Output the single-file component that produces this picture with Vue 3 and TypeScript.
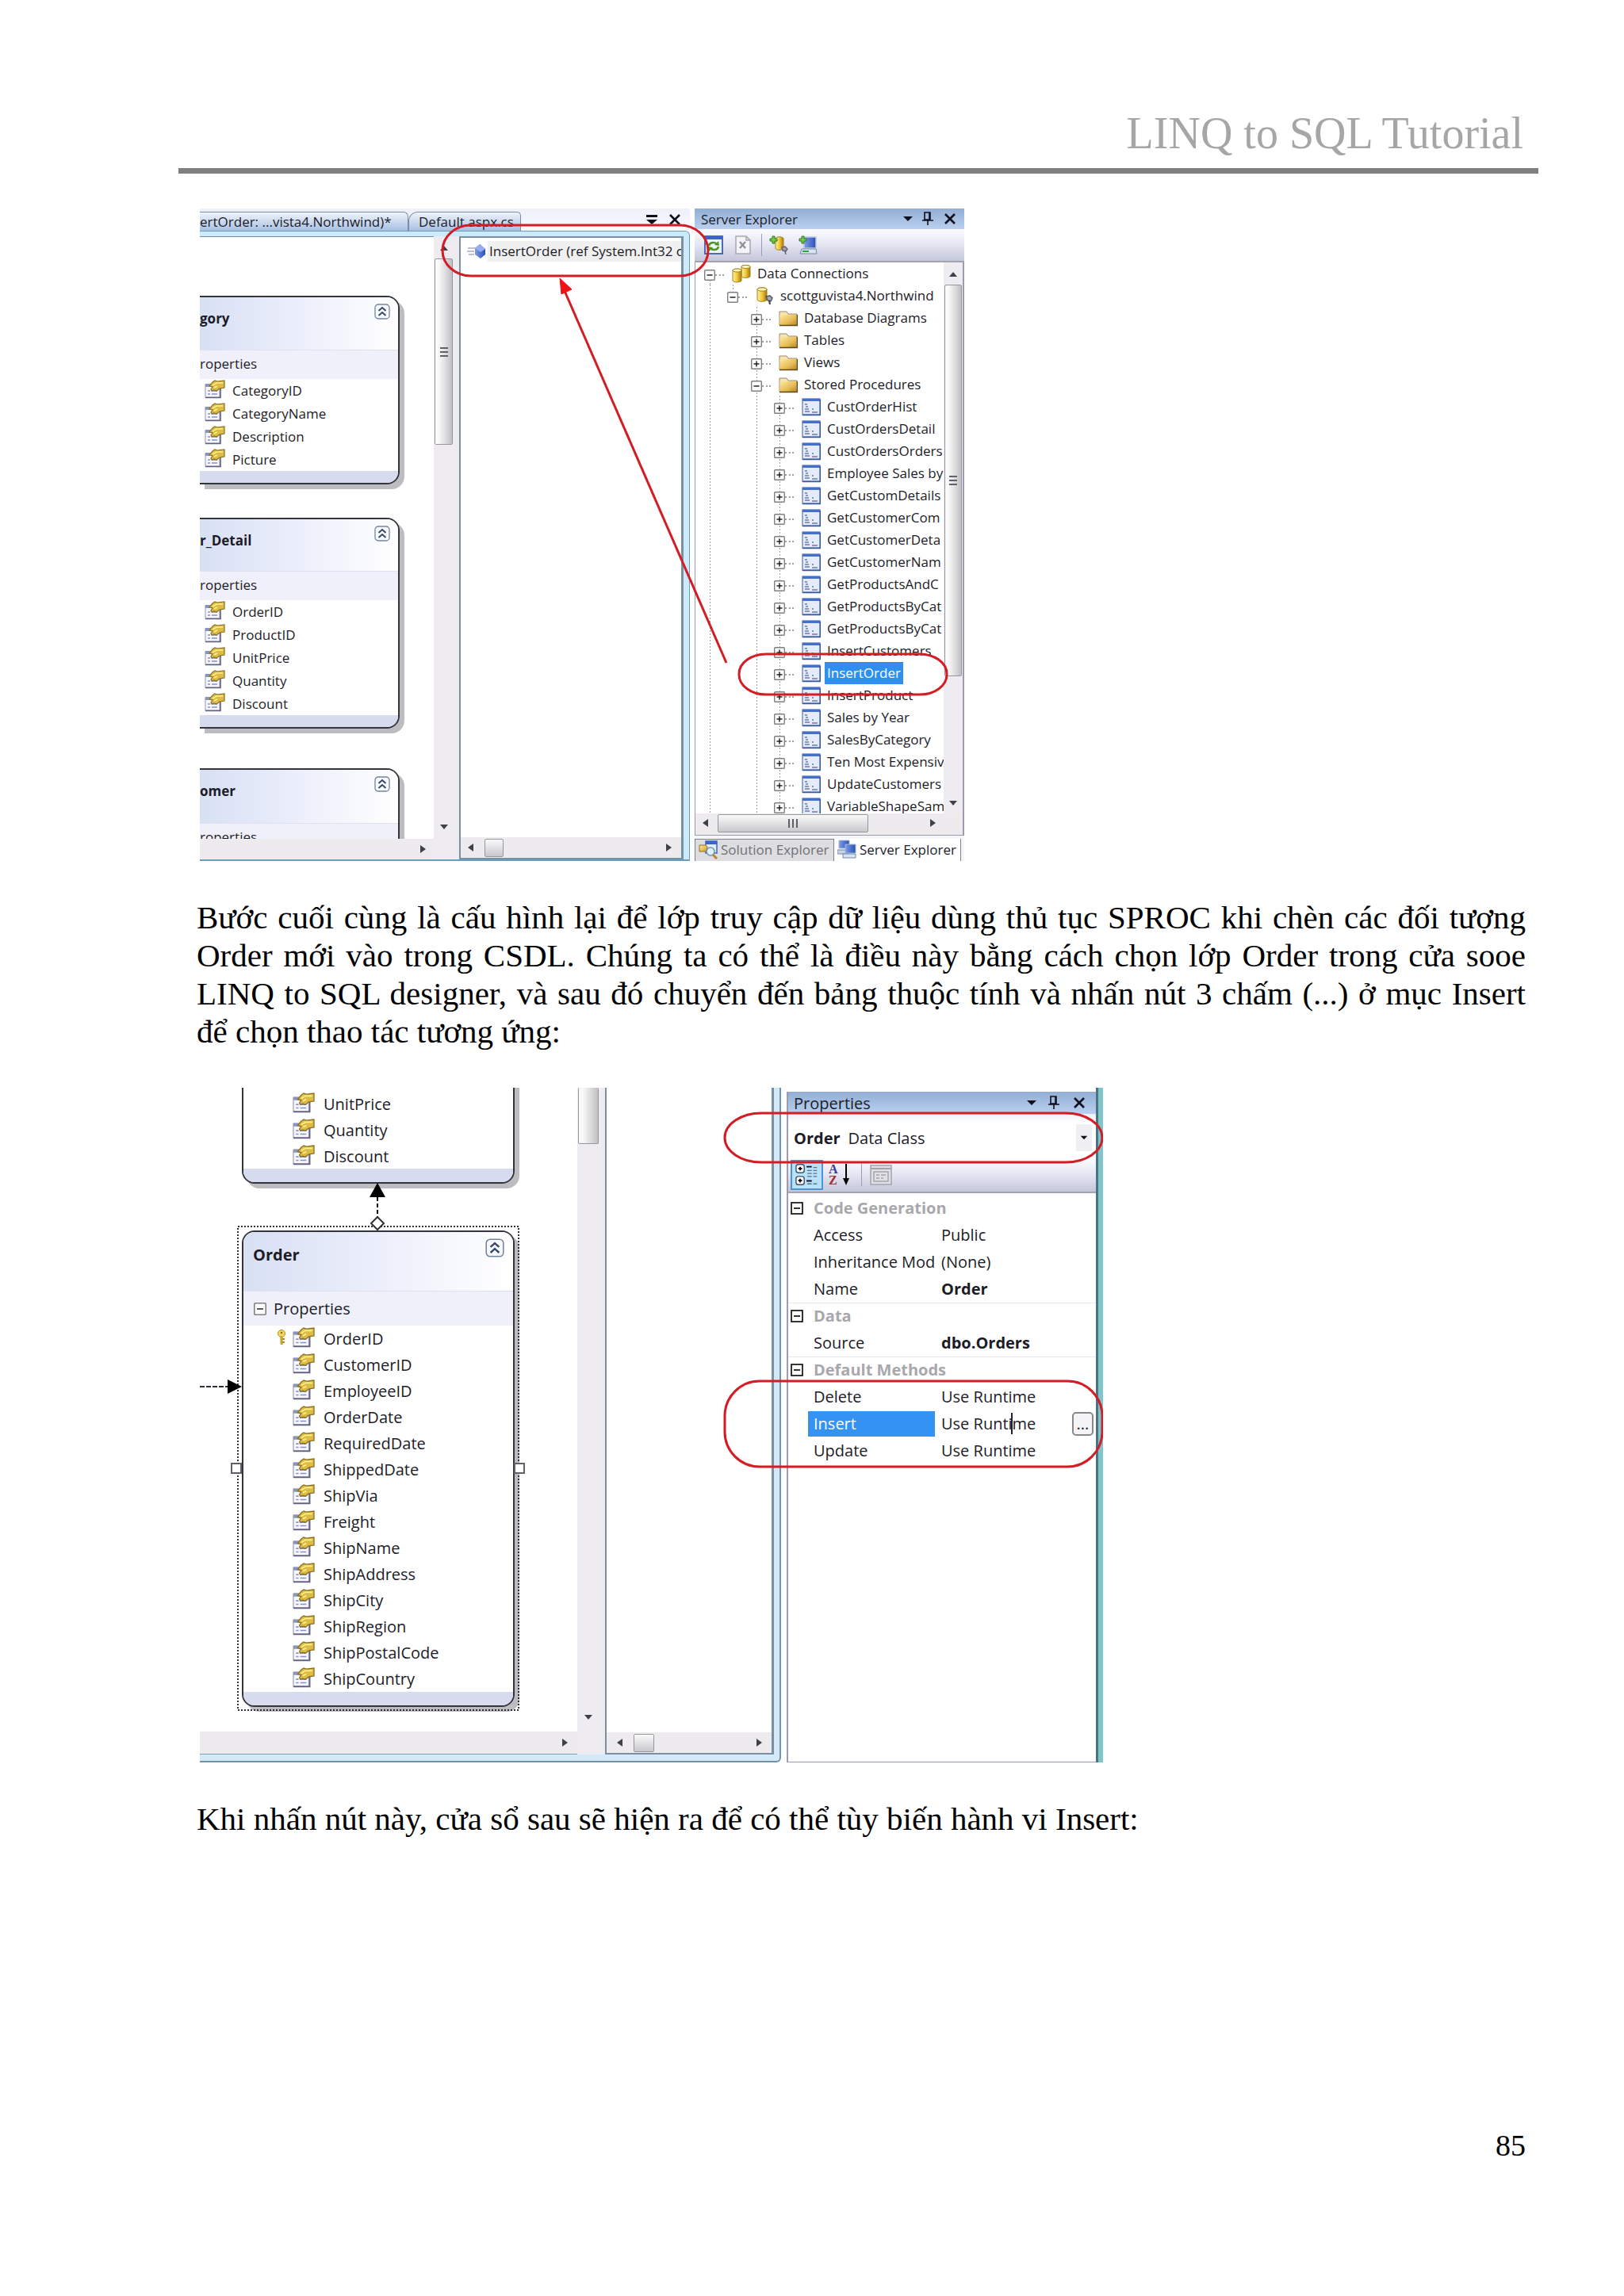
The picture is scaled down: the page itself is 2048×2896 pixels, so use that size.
<script setup lang="ts">
interface TreeItem {
  label: string
  level: number
  icon: string
  open?: boolean
  selected?: boolean
}

interface PropertyRow {
  label: string
  value?: string
  group?: boolean
  strong?: boolean
  selected?: boolean
}

interface Entity {
  id: string
  title: string
  fields: string[]
}

const entities: Entity[] = [
  { id: 'category', title: 'gory', fields: ['CategoryID', 'CategoryName', 'Description', 'Picture'] },
  { id: 'detail', title: 'r_Detail', fields: ['OrderID', 'ProductID', 'UnitPrice', 'Quantity', 'Discount'] },
  { id: 'customer', title: 'omer', fields: [] },
]

const procedures = [
  'CustOrderHist', 'CustOrdersDetail', 'CustOrdersOrders', 'Employee Sales by',
  'GetCustomDetails', 'GetCustomerCom', 'GetCustomerDeta', 'GetCustomerNam',
  'GetProductsAndC', 'GetProductsByCat', 'GetProductsByCat', 'InsertCustomers',
  'InsertOrder', 'InsertProduct', 'Sales by Year', 'SalesByCategory',
  'Ten Most Expensiv', 'UpdateCustomers', 'VariableShapeSam',
]

const tree: TreeItem[] = [
  { label: 'Data Connections', level: 0, icon: 'i-dbs', open: true },
  { label: 'scottguvista4.Northwind', level: 1, icon: 'i-db', open: true },
  { label: 'Database Diagrams', level: 2, icon: 'i-folder' },
  { label: 'Tables', level: 2, icon: 'i-folder' },
  { label: 'Views', level: 2, icon: 'i-folder' },
  { label: 'Stored Procedures', level: 2, icon: 'i-folder', open: true },
  ...procedures.map((label) => ({ label, level: 3, icon: 'i-proc', selected: label === 'InsertOrder' })),
]

const upperFields = ['UnitPrice', 'Quantity', 'Discount']
const orderFields = [
  'OrderID', 'CustomerID', 'EmployeeID', 'OrderDate', 'RequiredDate', 'ShippedDate', 'ShipVia',
  'Freight', 'ShipName', 'ShipAddress', 'ShipCity', 'ShipRegion', 'ShipPostalCode', 'ShipCountry',
]

const properties: PropertyRow[] = [
  { label: 'Code Generation', group: true },
  { label: 'Access', value: 'Public' },
  { label: 'Inheritance Mod', value: '(None)' },
  { label: 'Name', value: 'Order', strong: true },
  { label: 'Data', group: true },
  { label: 'Source', value: 'dbo.Orders', strong: true },
  { label: 'Default Methods', group: true },
  { label: 'Delete', value: 'Use Runtime' },
  { label: 'Insert', value: 'Use Runtime', selected: true },
  { label: 'Update', value: 'Use Runtime' },
]
</script>

<template>
  <div class="page">
    <svg class="sprite" aria-hidden="true">
      <defs>
        <linearGradient id="g-gold" x1="0" x2="1">
          <stop offset="0" stop-color="#fff3a0" /><stop offset=".5" stop-color="#f2c83c" /><stop offset="1" stop-color="#a87808" />
        </linearGradient>
        <linearGradient id="g-folder" x1="0" y1="0" x2="1" y2="1">
          <stop offset="0" stop-color="#fdeaa4" /><stop offset=".6" stop-color="#e6bc54" /><stop offset="1" stop-color="#b4862a" />
        </linearGradient>
        <linearGradient id="g-blue" x1="0" x2="1">
          <stop offset="0" stop-color="#7c9ce8" /><stop offset="1" stop-color="#2a50b4" />
        </linearGradient>
      </defs>
      <symbol id="i-prop" viewBox="0 0 26 24">
        <path d="M1 6h18v16H1z" fill="#f7f7ff" stroke="#a4a4bc" stroke-width="1.200" />
        <path d="M1 5h7v4H1z" fill="#8c96b4" />
        <path d="M1 22.500h19V9" fill="none" stroke="#606080" stroke-width="1.600" />
        <path d="M4 14h3m2 0h7M4 18h3m2 0h7" stroke="#8890c8" stroke-width="1.600" />
        <path d="m6 8 4-5 3-2 3 1 9-1v9l-6 1-4 3-3-1-3 1-1-2 2-3z" fill="#dcbc44" stroke="#8a7024" stroke-width="1.200" />
        <path d="m10 7 5-3 8 0M12 10l4-2" fill="none" stroke="#fff08c" stroke-width="1.600" />
      </symbol>
      <symbol id="i-up" viewBox="0 0 20 20">
        <rect x="1" y="1" width="18" height="18" rx="4" fill="#f8faff" stroke="#7484a0" stroke-width="1.300" />
        <path d="m5.500 9 4.500-4 4.500 4M5.500 15l4.500-4 4.500 4" fill="none" stroke="#36486c" stroke-width="2" />
      </symbol>
      <symbol id="i-dbs" viewBox="0 0 24 24">
        <path d="M12 3.500C12 1 23 1 23 3.500v12c0 2.500-11 2.500-11 0z" fill="url(#g-gold)" stroke="#a08020" />
        <path d="M1 8c0-2.500 11-2.500 11 0v13c0 2.500-11 2.500-11 0z" fill="url(#g-gold)" stroke="#a08020" />
        <ellipse cx="6.500" cy="8" rx="5.500" ry="2" fill="#fff6b8" stroke="#a08020" />
        <ellipse cx="17.500" cy="3.500" rx="5.500" ry="2" fill="#fff6b8" stroke="#a08020" />
      </symbol>
      <symbol id="i-db" viewBox="0 0 24 24">
        <path d="M3 4c0-3 12-3 12 0v13c0 3-12 3-12 0z" fill="url(#g-gold)" stroke="#a08020" />
        <ellipse cx="9" cy="4" rx="6" ry="2.200" fill="#fff6b8" stroke="#a08020" />
        <path d="m14 13 5-1 3 3-2 4-4-1z" fill="#a8a8b0" stroke="#505058" stroke-width="1.400" />
        <path d="m18 18 1 5" stroke="#404048" stroke-width="2" />
      </symbol>
      <symbol id="i-folder" viewBox="0 0 24 24">
        <path d="M1 21V4h9l2 3h11v14z" fill="#f4e6b8" stroke="#9c8860" />
        <path d="M1.500 8h21v13h-21z" fill="url(#g-folder)" />
        <path d="M1 21.500h22.500V8" fill="none" stroke="#604818" stroke-width="1.600" />
      </symbol>
      <symbol id="i-proc" viewBox="0 0 24 24">
        <rect x="1" y="2" width="22" height="20" fill="#e4ecfc" stroke="#6c88c4" stroke-width="1.400" />
        <path d="M1 2h22v3H1z" fill="#4470cc" />
        <path d="M4 9h3M5 12h3M4 15h5M4 18h6m3-3h2m-2 4h7" stroke="#6c7ca0" stroke-width="1.500" />
        <path d="M1 22.500h22.500V3" fill="none" stroke="#3c589c" stroke-width="1.500" />
      </symbol>
      <symbol id="i-plus" viewBox="0 0 14 14">
        <rect x=".7" y=".7" width="12.600" height="12.600" rx="1" fill="#fff" stroke="#808080" stroke-width="1.400" />
        <path d="M3.500 7h7M7 3.500v7" stroke="#202028" stroke-width="1.500" />
      </symbol>
      <symbol id="i-minus" viewBox="0 0 14 14">
        <rect x=".7" y=".7" width="12.600" height="12.600" rx="1" fill="#fff" stroke="#808080" stroke-width="1.400" />
        <path d="M3.500 7h7" stroke="#202028" stroke-width="1.500" />
      </symbol>
      <symbol id="i-box" viewBox="0 0 16 16">
        <rect x="1" y="1" width="14" height="14" fill="#fff" stroke="#202020" stroke-width="1.800" />
        <path d="M4 8h8" stroke="#202020" stroke-width="1.800" />
      </symbol>
      <symbol id="i-caret" viewBox="0 0 14 8"><path d="M1 1h12L7 7z" fill="#10101c" /></symbol>
      <symbol id="i-pin" viewBox="0 0 14 18">
        <path d="M3 1h7v9H3zM0 11h14M7 11v6M9 1v9" fill="none" stroke="#10101c" stroke-width="1.600" />
      </symbol>
      <symbol id="i-x" viewBox="0 0 14 14"><path d="m1 1 12 12M13 1 1 13" stroke="#10101c" stroke-width="2.600" /></symbol>
      <symbol id="i-menu" viewBox="0 0 14 14"><path d="M0 1h14v3H0zM0 7h14l-7 6z" fill="#10101c" /></symbol>
    </svg>

    <header class="page-head">LINQ to SQL Tutorial</header>

    <main>
      <figure class="shot shot-server">
        <section class="editor">
          <nav class="tabs">
            <button class="tab tab-first">ertOrder: ...vista4.Northwind)*</button>
            <button class="tab tab-second">Default.aspx.cs</button>
            <span class="grow"></span>
            <svg class="s14"><use href="#i-menu" /></svg>
            <svg class="s14"><use href="#i-x" /></svg>
          </nav>
          <div class="editor-frame">
            <div class="design">
              <div class="canvas">
                <article v-for="e in entities" :key="e.id" class="node node-cut" :class="e.id">
                  <header class="node-head">
                    <b>{{ e.title }}</b>
                    <svg class="s20"><use href="#i-up" /></svg>
                  </header>
                  <div class="node-section">roperties</div>
                  <ul class="fields">
                    <li v-for="f in e.fields" :key="f"><svg class="prop"><use href="#i-prop" /></svg>{{ f }}</li>
                  </ul>
                  <div class="node-foot"></div>
                </article>
              </div>
              <div class="hbar">
                <span class="grow"></span><i class="arrow right"></i>
              </div>
            </div>
            <div class="vbar vbar-design">
              <i class="arrow up"></i>
              <div class="thumb"><i></i><i></i><i></i></div>
              <span class="grow"></span>
              <i class="arrow down"></i>
            </div>
            <div class="methods">
              <div class="method">
                <svg class="method-icon" viewBox="0 0 24 20">
                  <path d="M1 6h9M0 10h9M2 14h7" stroke="#a8a8c0" stroke-width="1.500" />
                  <path d="m16 1 7 6v7l-6 5-7-5V6z" fill="url(#g-blue)" />
                  <path d="m16 1 7 6-6 4-7-5z" fill="#98acf4" />
                </svg>
                <span>InsertOrder (ref System.Int32 o</span>
              </div>
              <div class="grow"></div>
              <div class="hbar hbar-methods">
                <i class="arrow left"></i><div class="thumb"></div><span class="grow"></span><i class="arrow right"></i>
              </div>
            </div>
          </div>
        </section>

        <section class="explorer">
          <header class="titlebar">
            <span class="grow">Server Explorer</span>
            <svg class="caret"><use href="#i-caret" /></svg>
            <svg class="pin"><use href="#i-pin" /></svg>
            <svg class="s14"><use href="#i-x" /></svg>
          </header>
          <div class="toolbar">
            <button aria-label="Refresh">
              <svg viewBox="0 0 24 24">
                <rect x="1" y="1" width="22" height="22" fill="#eef4ff" stroke="#3c5cac" stroke-width="1.800" />
                <path d="M1 1h22v4H1z" fill="#3c64c4" />
                <path d="M6 13c1-5 8-5 10-2M18 14c-1 5-8 5-10 2" fill="none" stroke="#4c9820" stroke-width="2.600" />
                <path d="m18 7 1 6-6-1zM6 20l-1-6 6 1z" fill="#4c9820" />
              </svg>
            </button>
            <button aria-label="Stop">
              <svg viewBox="0 0 24 24">
                <path d="M3 1h13l5 5v17H3zM16 1v5h5" fill="#f4f4f8" stroke="#a8a8b0" stroke-width="1.500" />
                <path d="m8 8 7 8m0-8-7 8" stroke="#909098" stroke-width="2.400" />
              </svg>
            </button>
            <i class="sep"></i>
            <button aria-label="Connect to database">
              <svg viewBox="0 0 24 24">
                <path d="M8 4c0-3 10-3 10 0v12c0 3-10 3-10 0z" fill="url(#g-gold)" stroke="#a08020" />
                <path d="m16 15 4-1 3 3-2 3-4-1zM20 20l1 4" fill="#a0a0a8" stroke="#606070" stroke-width="1.400" />
                <path d="M4 1h3v3h3v3H7v3H4V7H1V4h3z" fill="#74c848" stroke="#2c7c1c" />
              </svg>
            </button>
            <button aria-label="Connect to server">
              <svg viewBox="0 0 24 24">
                <path d="M7 2h15v14H7z" fill="url(#g-blue)" stroke="#b8c8e0" stroke-width="1.500" />
                <path d="M4 17h18l1 6H2z" fill="#d8e4f0" stroke="#7088a8" />
                <path d="M5 20h8" stroke="#38a048" stroke-width="2" />
                <path d="M4 1h3v3h3v3H7v3H4V7H1V4h3z" fill="#74c848" stroke="#2c7c1c" />
              </svg>
            </button>
          </div>
          <div class="tree-wrap">
            <ul class="tree">
              <li v-for="(t, i) in tree" :key="i" :class="'l' + t.level">
                <svg class="s14 expander"><use :href="t.open ? '#i-minus' : '#i-plus'" /></svg>
                <i class="dots"></i>
                <svg class="s24"><use :href="'#' + t.icon" /></svg>
                <span :class="{ picked: t.selected }">{{ t.label }}</span>
              </li>
            </ul>
            <div class="vbar vbar-tree">
              <i class="arrow up"></i>
              <div class="thumb"><i></i><i></i><i></i></div>
              <span class="grow"></span>
              <i class="arrow down"></i>
            </div>
          </div>
          <div class="hbar hbar-tree">
            <i class="arrow left"></i>
            <div class="thumb"><i></i><i></i><i></i></div>
            <span class="grow"></span>
            <i class="arrow right"></i>
          </div>
          <nav class="bottom-tabs">
            <button class="inactive">
              <svg class="s24" viewBox="0 0 24 24">
                <path d="M9 1h14v15H9z" fill="#e4ecff" stroke="#3c64c4" stroke-width="1.500" /><path d="M9 1h14v4H9z" fill="#3c64c4" />
                <path d="M1 6h8l2 2v6H1z" fill="url(#g-folder)" stroke="#907020" />
                <circle cx="15" cy="14" r="5" fill="#d8f0ff" stroke="#7890a8" stroke-width="1.500" /><path d="m18 18 5 5" stroke="#b08838" stroke-width="3" />
              </svg>
              Solution Explorer
            </button>
            <button class="active">
              <svg class="s24" viewBox="0 0 24 24">
                <path d="M2 1h13v10H2z" fill="url(#g-blue)" stroke="#a8b8d8" /><path d="M0 13h14v5H0z" fill="#c8d4e4" stroke="#7088a8" />
                <path d="M10 6h13v11H10z" fill="url(#g-blue)" stroke="#a8b8d8" /><path d="M7 18h16v5H7z" fill="#d8e4f0" stroke="#7088a8" />
              </svg>
              Server Explorer
            </button>
          </nav>
        </section>

        <svg class="marks" aria-hidden="true">
          <rect x="306" y="21" width="335" height="64" rx="36" ry="32" />
          <rect x="680" y="562" width="262" height="51" rx="34" ry="25" />
          <path d="M664 573 460 104" />
          <path class="tip" d="m454 88 15 14-13 6z" />
        </svg>
      </figure>

      <p class="text">Bước cuối cùng là cấu hình lại để lớp truy cập dữ liệu dùng thủ tục SPROC khi chèn các đối tượng Order mới vào trong CSDL. Chúng ta có thể là điều này bằng cách chọn lớp Order trong cửa sooe LINQ to SQL designer, và sau đó chuyển đến bảng thuộc tính và nhấn nút 3 chấm (...) ở mục Insert để chọn thao tác tương ứng:</p>

      <figure class="shot shot-props">
        <section class="editor2">
          <div class="design">
            <div class="canvas">
              <article class="node upper">
                <ul class="fields">
                  <li v-for="f in upperFields" :key="f"><svg class="prop"><use href="#i-prop" /></svg>{{ f }}</li>
                </ul>
                <div class="node-foot"></div>
              </article>
              <article class="node order">
                <header class="node-head">
                  <b>Order</b>
                  <svg class="s24"><use href="#i-up" /></svg>
                </header>
                <div class="node-section"><svg class="s16"><use href="#i-minus" /></svg>Properties</div>
                <ul class="fields">
                  <li v-for="(f, i) in orderFields" :key="f">
                    <svg v-if="i === 0" class="key" viewBox="0 0 12 20">
                      <circle cx="6" cy="5" r="4.500" fill="#f4d860" stroke="#b08c20" /><circle cx="6" cy="4" r="1.300" fill="#907010" />
                      <path d="M5 9h2v10l-2-1z" fill="#e4c040" stroke="#b08c20" /><path d="M7 12h3M7 16h3" stroke="#b08c20" stroke-width="2" />
                    </svg>
                    <svg class="prop"><use href="#i-prop" /></svg>{{ f }}
                  </li>
                </ul>
                <div class="node-foot"></div>
              </article>
              <svg class="links" aria-hidden="true">
                <rect x="48" y="175" width="354" height="610" fill="none" stroke="#303038" stroke-width="2" stroke-dasharray="2 2" />
                <path d="M224 138v26" stroke="#000" stroke-width="2" stroke-dasharray="5 3" />
                <path d="m224 120 10 18h-20z" />
                <path d="m224 163 8 8-8 8-8-8z" fill="#fff" stroke="#303038" stroke-width="2" />
                <path d="M0 377h36" stroke="#303038" stroke-width="2" stroke-dasharray="6 2" />
                <path d="m35 368 18 9-18 9z" />
                <path d="M40 474h12v12H40zM397 474h12v12h-12z" fill="#fff" stroke="#606068" stroke-width="2" />
              </svg>
            </div>
            <div class="hbar"><span class="grow"></span><i class="arrow right"></i></div>
          </div>
          <div class="vbar vbar-order">
            <div class="thumb"></div>
            <span class="grow"></span>
            <i class="arrow down"></i>
          </div>
          <div class="methods">
            <div class="grow"></div>
            <div class="hbar hbar-methods">
              <i class="arrow left"></i><div class="thumb"></div><span class="grow"></span><i class="arrow right"></i>
            </div>
          </div>
        </section>

        <section class="props">
          <header class="titlebar">
            <span class="grow">Properties</span>
            <svg class="caret"><use href="#i-caret" /></svg>
            <svg class="pin"><use href="#i-pin" /></svg>
            <svg class="s14"><use href="#i-x" /></svg>
          </header>
          <button class="combo">
            <b>Order</b><span class="grow">Data Class</span>
            <i class="drop"><svg><use href="#i-caret" /></svg></i>
          </button>
          <div class="toolbar">
            <button class="on" aria-label="Categorized">
              <svg viewBox="0 0 36 34">
                <g fill="#fff" stroke="#405070" stroke-width="1.500"><rect x="3" y="3" width="11" height="11" rx="3" /><rect x="3" y="19" width="11" height="11" rx="3" /></g>
                <path d="M6 8.500h5M8.500 6v5M6 24.500h5M8.500 22v5" stroke="#101020" stroke-width="2" />
                <path d="M17 6h7M17 25h7" stroke="#101020" stroke-width="2" />
                <path d="M18 11h6m2 0h5M18 15h6m2 0h5M18 19h6m2 0h5M26 7h5M18 29h6m2 0h5" stroke="#607088" stroke-width="1.500" />
              </svg>
            </button>
            <button class="sort" aria-label="Alphabetical">
              <span class="az"><b>A</b><b>Z</b></span>
              <svg viewBox="0 0 8 28"><path d="M4 0v20" stroke="#000" stroke-width="2" /><path d="M0 18h8l-4 9z" /></svg>
            </button>
            <i class="sep"></i>
            <button class="pages" aria-label="Property pages">
              <svg viewBox="0 0 28 28">
                <rect x="1" y="2" width="26" height="24" fill="#e0e0e6" stroke="#a4a4ac" stroke-width="1.500" /><path d="M1 6h26" stroke="#a4a4ac" stroke-width="2" />
                <path d="M5 10h18v12H5zM8 14h4m2 0h6M8 18h4m2 0h3" fill="none" stroke="#a4a4ac" stroke-width="1.500" />
              </svg>
            </button>
          </div>
          <table class="grid">
            <colgroup><col class="c-exp" /><col class="c-name" /><col /></colgroup>
            <tbody>
              <tr v-for="p in properties" :key="p.label" :class="{ group: p.group, current: p.selected }">
                <td class="exp"><svg v-if="p.group" class="s16"><use href="#i-box" /></svg></td>
                <th :colspan="p.group ? 2 : 1" scope="row"><span>{{ p.label }}</span></th>
                <td v-if="!p.group" class="value" :class="{ strong: p.strong }">
                  <div v-if="p.selected" class="edit">
                    <input type="text" :value="p.value" aria-label="Insert" />
                    <i class="cursor"></i>
                    <button>...</button>
                  </div>
                  <template v-else>{{ p.value }}</template>
                </td>
              </tr>
            </tbody>
          </table>
        </section>
        <div class="edge"></div>

        <svg class="marks" aria-hidden="true">
          <rect x="662" y="32" width="476" height="62" rx="46" ry="31" />
          <rect x="662" y="370" width="476" height="108" rx="44" ry="44" />
        </svg>
      </figure>

      <p class="text">Khi nhấn nút này, cửa sổ sau sẽ hiện ra để có thể tùy biến hành vi Insert:</p>
    </main>

    <footer class="page-foot">85</footer>
  </div>
</template>

<style>
body { margin: 0; background: #fff; }
</style>

<style scoped>
.page {
  padding: 136px 124px 166px 248px;
  font-family: "Liberation Serif", "Times New Roman", serif;
  color: #000;
}
.sprite { display: block; width: 0; height: 0; }
.page-head {
  margin: 0 -16px 0 -23px;
  padding: 0 19px 12px 0;
  border-bottom: 7px solid #808080;
  font-size: 56px;
  line-height: 64px;
  text-align: right;
  color: #a6a6a6;
}
.text { margin: 47px 0; font-size: 41px; line-height: 48px; text-align: justify; }
.page-foot { margin-top: 364px; font-size: 38px; line-height: 48px; text-align: right; }

.shot {
  position: relative;
  display: flex;
  margin: 0 0 0 4px;
  font-family: "Open Sans", "Noto Sans", sans-serif;
  color: #1c1c28;
  overflow: hidden;
}
.shot *, .shot *::before { box-sizing: border-box; }
.shot svg { flex: none; }
.shot ul { margin: 0; padding: 0; list-style: none; }
.shot button { margin: 0; padding: 0; border: 0; background: none; font: inherit; color: inherit; text-align: left; white-space: nowrap; }
.shot-server { width: 964px; height: 823px; margin-top: 44px; font-size: 17px; }
.shot-props { width: 1139px; height: 851px; font-size: 20px; }
.grow { flex: 1; }
.s14 { width: 14px; height: 14px; }
.s16 { width: 16px; height: 16px; }
.s20 { width: 20px; height: 20px; }
.s24 { width: 24px; height: 24px; }
.marks { position: absolute; inset: 0; width: 100%; height: 100%; fill: none; stroke: #d41c24; stroke-width: 3; pointer-events: none; }
.marks .tip { fill: #f01018; stroke: #f01018; stroke-width: 1; }

/* document window with tab strip */
.editor { display: flex; flex-direction: column; width: 618px; margin-right: 6px; }
.tabs { display: flex; align-items: center; height: 28px; padding-right: 12px; gap: 15px; background: linear-gradient(#eef1fa, #f7f9fd); }
.tabs .grow { margin-left: -15px; }
.shot .tab { align-self: flex-end; height: 24px; line-height: 22px; border: 1px solid #7c8ca8; border-bottom: 0; background: linear-gradient(#f0f4fb, #a8bfe2); }
.shot .tab-first { width: 263px; border-left: 0; border-radius: 0 6px 0 0; }
.shot .tab-second { width: 142px; margin-left: -15px; padding-left: 12px; border-radius: 12px 5px 0 0; }
.editor-frame { flex: 1; display: flex; min-height: 0; padding: 6px 7px 0 0; border: 1px solid #6c9cbc; border-width: 1px 1px 2px 0; border-radius: 0 6px 0 0; background: #cdeafa; }
.design { flex: 1; display: flex; flex-direction: column; min-width: 0; background: #fff; }
.canvas { flex: 1; position: relative; overflow: hidden; border-top: 1px solid #6c90a8; }
.shot-props .canvas { border-top: 0; }
.hbar { display: flex; align-items: center; height: 26px; background: #edebee; }
.vbar { display: flex; flex-direction: column; align-items: flex-start; background: #eeecf0; }
.methods { display: flex; flex-direction: column; min-width: 0; border: 2px solid #7890a4; border-right-width: 3px; background: #fff; }
.shot-server .methods { width: 283px; }
.method { display: flex; align-items: center; height: 34px; padding-left: 8px; overflow: hidden; white-space: nowrap; }
.method span { background: #f0f0f0; line-height: 26px; padding-left: 2px; }
.method-icon { width: 24px; height: 20px; margin-right: 2px; }

/* scrollbar parts */
.arrow { width: 0; height: 0; border: 5px solid transparent; }
.arrow.up { border-bottom: 6px solid #404048; border-top: 0; }
.arrow.down { border-top: 6px solid #404048; border-bottom: 0; }
.arrow.left { border-right: 7px solid #404048; border-left: 0; }
.arrow.right { border-left: 7px solid #404048; border-right: 0; }
.thumb { display: flex; align-items: center; justify-content: center; gap: 3px; border: 1px solid #98989c; border-radius: 2px; background: linear-gradient(#fafafa, #c8c8cc); }
.thumb i { width: 2px; height: 11px; background: #606068; }
.vbar .thumb { flex-direction: column; background: linear-gradient(90deg, #fafafa 20%, #c0c0c4); }
.vbar .thumb i { width: 10px; height: 2px; }
.vbar-design { width: 32px; padding: 12px 0 38px 1px; }
.vbar-design .arrow { margin-left: 7px; }
.vbar-design .thumb { width: 23px; height: 235px; margin-top: 10px; }
.shot-server .design .hbar { padding-right: 10px; }
.hbar-methods { padding: 0 12px 0 9px; }
.hbar-methods .thumb { width: 24px; height: 23px; margin-left: 14px; }

/* diagram entities */
.node { position: absolute; display: flex; flex-direction: column; border: 2px solid #34343c; border-radius: 16px; background: #fff; box-shadow: 6px 6px 0 #bdbdc1; overflow: hidden; }
.node-cut { left: 0; width: 252px; border-left: 0; border-radius: 0 16px 16px 0; }
.category { top: 74px; height: 238px; }
.detail { top: 354px; height: 266px; }
.customer { top: 670px; height: 200px; }
.node-head { display: flex; justify-content: space-between; height: 67px; padding: 8px 10px 0 0; line-height: 38px; background: linear-gradient(90deg, #d8e0f4, #eceffb 50%, #fff); }
.node-section { display: flex; align-items: center; height: 38px; padding-bottom: 4px; border-top: 1px solid #dfe1ee; background: #eff0f9; }
.fields { flex: 1; }
.fields li { display: flex; align-items: center; height: 29px; padding-left: 6px; }
.prop { width: 26px; height: 24px; margin-right: 9px; margin-bottom: 4px; }
.node-foot { height: 15px; background: #d6dcee; }

/* tool windows */
.explorer { width: 340px; display: flex; flex-direction: column; }
.titlebar { display: flex; align-items: center; height: 26px; padding: 0 11px 0 8px; background: linear-gradient(#92aed4, #b9d0f0); }
.titlebar .caret { width: 14px; height: 8px; margin-right: 11px; }
.titlebar .pin { width: 14px; height: 18px; margin-right: 14px; }
.toolbar { display: flex; align-items: center; height: 42px; border-bottom: 2px solid #a4a4b0; background: linear-gradient(#fcfcff, #e4e5f2 50%, #c4c6da); }
.explorer .toolbar { padding-left: 12px; }
.shot .explorer .toolbar button { width: 24px; height: 24px; margin-right: 13px; }
.explorer .toolbar svg { display: block; width: 24px; height: 24px; }
.sep { width: 1px; height: 28px; background: #9c9cac; }
.explorer .sep { margin: 0 9px 0 -2px; }
.tree-wrap { display: flex; height: 695px; border: 1px solid #9c9cac; border-width: 0 2px 0 1px; }
.tree { flex: 1; min-width: 0; overflow: hidden; background: #fff; margin-right: 1px; }
.tree li { position: relative; display: flex; align-items: center; height: 28px; white-space: nowrap; }
.tree li.l0 { padding-left: 11px; }
.tree li.l1 { padding-left: 40px; }
.tree li.l2 { padding-left: 70px; }
.tree li.l3 { padding-left: 99px; }
.tree .s24 { margin-right: 5px; }
.tree .expander { position: relative; top: 2px; }
.tree span { padding: 0 3px; line-height: 28px; }
.tree .picked { background: #2f8ff0; color: #fff; }
.dots { flex: none; width: 11px; margin: 4px 10px 0 0; border-top: 2px dotted #a0a0a8; }
.tree li::before {
  content: "";
  position: absolute;
  left: 0;
  top: 0;
  width: 107px;
  height: 28px;
  background-image: repeating-linear-gradient(#9c9ca4 0 2px, transparent 2px 4px), repeating-linear-gradient(#9c9ca4 0 2px, transparent 2px 4px), repeating-linear-gradient(#9c9ca4 0 2px, transparent 2px 4px);
  background-repeat: no-repeat;
  background-size: 1px 28px;
  background-position: 18px 0, 77px 0, 106px 0;
}
.tree li.l2::before { background-position: 18px 0, 77px 0, 77px 0; }
.tree li.l1::before { background-position: 18px 0, 18px 0, 47px 0; background-size: 1px 28px, 1px 28px, 1px 8px; }
.tree li.l0::before { background-position: 18px 22px; }
.vbar-tree { width: 24px; padding: 12px 0 10px 1px; }
.vbar-tree .arrow { margin-left: 6px; }
.vbar-tree .thumb { width: 22px; height: 494px; margin-top: 10px; }
.hbar-tree { height: 28px; padding: 0 34px 3px 9px; border: 1px solid #9c9cac; border-top: 0; border-right-width: 2px; }
.hbar-tree .thumb { width: 190px; height: 23px; margin-left: 12px; }
.bottom-tabs { display: flex; flex: 1; padding-top: 4px; background: #f4f6fa; }
.shot .bottom-tabs button { display: flex; align-items: center; height: 28px; padding: 0 4px 2px; gap: 4px; }
.shot .bottom-tabs .inactive { width: 176px; border: 1px solid #808088; border-bottom: 0; background: #dedee0; color: #707078; }
.shot .bottom-tabs .active { width: 160px; border-right: 1px solid #808088; background: #fff; }

/* designer beside the property grid */
.editor2 { display: flex; width: 733px; margin-right: 7px; padding: 0 7px 8px 0; border: 1px solid #7094b0; border-width: 0 2px 2px 0; border-radius: 0 0 6px 0; background: #d4e9f7; }
.shot-props .design .hbar { height: 29px; padding-right: 12px; border-bottom: 1px solid #80a0b4; }
.vbar-order { width: 35px; padding: 0 0 44px 1px; }
.vbar-order .thumb { width: 26px; height: 71px; border-top: 0; }
.vbar-order .arrow { margin-left: 8px; }
.shot-props .methods { width: 213px; border-top: 0; }
.shot-props .hbar-methods { padding-left: 13px; }
.shot-props .hbar-methods .thumb { width: 26px; }
.upper { left: 53px; top: -40px; width: 344px; height: 161px; padding-top: 42px; }
.order { left: 53px; top: 180px; width: 344px; height: 601px; }
.shot-props .fields li { height: 33px; padding-left: 61px; position: relative; }
.shot-props .prop { width: 30px; height: 26px; margin-right: 10px; }
.upper .fields { flex: none; height: 98px; }
.upper .node-foot { flex: 1; }
.order .node-head { height: 75px; padding: 8px 11px 0 12px; line-height: 42px; }
.order .node-section { height: 45px; padding: 0 0 0 13px; gap: 9px; }
.order .node-foot { height: 17px; }
.key { position: absolute; left: 42px; top: 5px; width: 12px; height: 20px; }
.links { position: absolute; inset: 0; width: 100%; height: 100%; }

.props { width: 390px; margin-top: 5px; border-left: 2px solid #9c9cac; border-bottom: 1px solid #9c9cac; }
.props .titlebar { height: 28px; padding: 0 14px 0 7px; }
.props .titlebar .caret { margin-right: 14px; }
.props .titlebar .pin { margin-right: 18px; }
.shot .combo { display: flex; align-items: center; gap: 10px; width: 100%; height: 56px; padding: 4px 5px 0 7px; background: linear-gradient(#eceef4, #fff 20%); }
.drop { display: flex; align-items: center; justify-content: center; width: 20px; height: 34px; background: #f0f0f2; }
.drop svg { width: 10px; height: 6px; }
.props .toolbar { height: 44px; padding-left: 3px; }
.shot .toolbar .on { width: 41px; height: 38px; padding: 1px; border: 2px solid #4c94d4; background: #b8e2fa; }
.on svg { display: block; width: 36px; height: 32px; }
.shot .toolbar .sort { display: flex; align-items: center; gap: 6px; margin-left: 7px; }
.az { display: flex; flex-direction: column; font-family: "Liberation Serif", serif; font-size: 16px; line-height: 14px; color: #34408c; }
.az b + b { color: #a02c34; }
.sort svg { width: 8px; height: 28px; }
.props .sep { margin: 0 10px 0 15px; }
.pages svg { display: block; width: 28px; height: 28px; }
.grid { width: 100%; table-layout: fixed; border-collapse: collapse; margin-top: 2px; }
.c-exp { width: 25px; }
.c-name { width: 160px; }
.grid tr { height: 34px; }
.grid td, .grid th { height: 34px; padding: 0; line-height: 32px; font-weight: 400; text-align: left; white-space: nowrap; overflow: hidden; }
.grid .exp { padding-left: 3px; }
.grid .exp svg { display: block; }
.grid th span { display: block; padding-left: 7px; overflow: hidden; }
.grid .group th { font-weight: 700; color: #a8a8ac; }
.grid tr:not(:first-child).group { border-top: 1px solid #e8e8ee; }
.grid .value { padding-left: 8px; }
.grid .strong { font-weight: 700; }
.current th span { background: #3492f2; color: #fff; }
.edit { position: relative; display: flex; align-items: center; height: 32px; }
.edit input { flex: 1; min-width: 0; height: 32px; padding: 0; border: 0; background: none; font: inherit; color: inherit; }
.cursor { position: absolute; left: 88px; top: 2px; width: 2px; height: 27px; background: #202038; }
.shot .edit button { width: 27px; height: 30px; margin-right: 3px; border: 2px solid #88888c; border-radius: 5px; background: #f4f4f6; line-height: 24px; text-align: center; }
.edge { flex: none; width: 9px; border-left: 3px solid #4c7480; background: #7ec6cc; }
</style>
